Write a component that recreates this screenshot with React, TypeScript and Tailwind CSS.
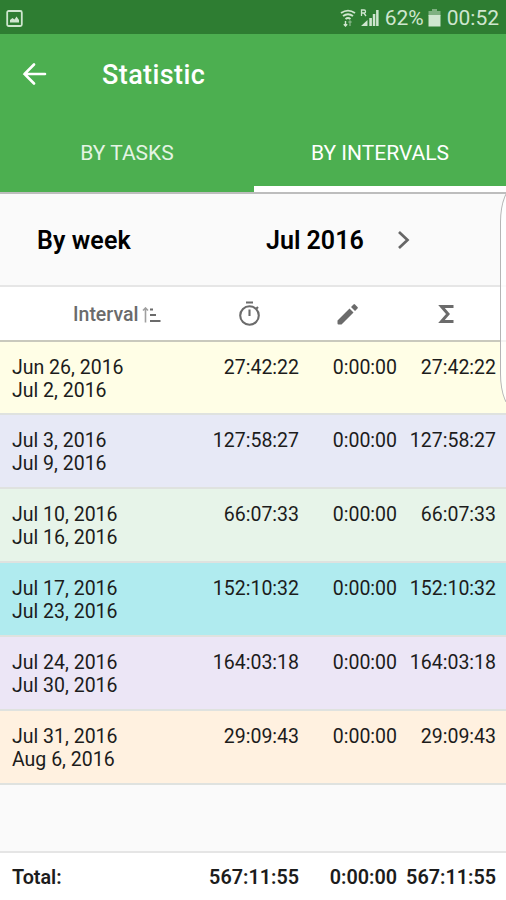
type Interval = {
  from: string;
  to: string;
  tracked: string;
  edited: string;
  total: string;
  color: string;
};

const intervals: Interval[] = [
  { from: 'Jun 26, 2016', to: 'Jul 2, 2016', tracked: '27:42:22', edited: '0:00:00', total: '27:42:22', color: 'h-[73px] bg-[#fffee6]' },
  { from: 'Jul 3, 2016', to: 'Jul 9, 2016', tracked: '127:58:27', edited: '0:00:00', total: '127:58:27', color: 'h-[74px] bg-[#e7e9f6]' },
  { from: 'Jul 10, 2016', to: 'Jul 16, 2016', tracked: '66:07:33', edited: '0:00:00', total: '66:07:33', color: 'h-[74px] bg-[#e7f4e9]' },
  { from: 'Jul 17, 2016', to: 'Jul 23, 2016', tracked: '152:10:32', edited: '0:00:00', total: '152:10:32', color: 'h-[74px] bg-[#b0ebef]' },
  { from: 'Jul 24, 2016', to: 'Jul 30, 2016', tracked: '164:03:18', edited: '0:00:00', total: '164:03:18', color: 'h-[74px] bg-[#ece6f6]' },
  { from: 'Jul 31, 2016', to: 'Aug 6, 2016', tracked: '29:09:43', edited: '0:00:00', total: '29:09:43', color: 'h-[74px] bg-[#fff1e0]' },
];

function StatusBar() {
  return (
    <div className="flex h-[34px] shrink-0 items-center bg-[#2e7d32] pl-[6px] pr-[7px] pt-[2px] text-[#cfe6cf]">
      <svg width="17" height="17" viewBox="0 0 17 17" fill="none">
        <rect x="1.2" y="1" width="14.6" height="15" rx="1.5" stroke="currentColor" strokeWidth="1.8" />
        <path d="M4 12.5V10l2.5-2 2 1.5L10.5 6.5 13 10v2.5z" fill="currentColor" />
      </svg>
      <div className="ml-auto flex items-center">
        <svg width="16" height="18" viewBox="0 0 16 18" fill="none" stroke="currentColor" strokeWidth="1.9">
          <path d="M1 4Q8-.8 15 4M3 7q5-3.6 10 0M5.5 10q2.5-2 5 0" />
          <path d="M5.5 12v5M3.8 15.2l1.7 1.8 1.7-1.8" strokeWidth="1.4" />
          <path d="M10 17v-5M8.5 13.5l1.5-1.5 1.5 1.5" strokeWidth="1.4" opacity=".5" />
        </svg>
        <svg className="ml-[4px]" width="19" height="18" viewBox="0 0 19 18" fill="currentColor">
          <path d="M1 17 7.5 11v6zM9.3 9h2.6v8H9.3zM12.8 5h2.5v12h-2.5zM16.1 1h2.5v16h-2.5z" />
          <path d="M1.5 7V1h2.7q1.3 0 1.3 1.5T4.2 4H1.5M3.8 4 6 7" fill="none" stroke="currentColor" strokeWidth="1.3" />
        </svg>
        <span className="ml-[6px] text-[21px] leading-6">62%</span>
        <svg className="ml-[4px]" width="13" height="18" viewBox="0 0 13 18" fill="currentColor">
          <path d="M4 0h5v2h3.5v5H.5V2H4z" opacity=".5" />
          <path d="M.5 6h12v11.5H.5z" />
        </svg>
        <span className="ml-[6px] text-[21px] leading-6">00:52</span>
      </div>
    </div>
  );
}

function TimerIcon() {
  return (
    <svg width="26" height="28" viewBox="0 0 26 28" fill="none" stroke="currentColor" strokeWidth="2.1">
      <circle cx="13.5" cy="15.5" r="9.3" />
      <path d="M10 2.5h7M13.5 9.5v6.5M20 9l2-2" />
    </svg>
  );
}

function Header() {
  return (
    <header className="flex h-[158px] shrink-0 flex-col bg-[#4caf50] text-white">
      <div className="flex h-[81px] items-center pl-[22px]">
        <svg width="26" height="24" viewBox="0 0 26 24" fill="none" stroke="currentColor" strokeWidth="2.6" strokeLinecap="round">
          <path d="M2.5 11H23M12 1.5 2.5 11l9.5 9.5" />
        </svg>
        <h1 className="ml-[54px] pt-[2px] text-[27px] font-medium tracking-[0.4px]">Statistic</h1>
      </div>
      <div className="flex flex-1 text-[21px]">
        <button className="flex-1 pt-[1px] pl-[1px] text-[#e4f4e4]">BY TASKS</button>
        <button className="ml-[1px] flex-1 border-b-[6px] border-white pt-[7px]">BY INTERVALS</button>
      </div>
    </header>
  );
}

function Cells({ tracked, edited, total }: { tracked: string; edited: string; total: string }) {
  return (
    <>
      <span className="w-[99px] text-right">{tracked}</span>
      <span className="w-[98px] text-right">{edited}</span>
      <span className="w-[99px] text-right">{total}</span>
    </>
  );
}

export default function App() {
  return (
    <div className="relative flex h-[900px] w-[506px] flex-col overflow-hidden bg-[#fafafa] font-[Roboto,sans-serif] text-[#1c1c1c]">
      <StatusBar />
      <Header />

      <div className="flex h-[95px] shrink-0 items-center border-t-2 border-b-2 border-t-[#bdbdbd] border-b-[#e6e6e6] pt-[3px] text-[25px] font-semibold text-black">
        <span className="w-[229px] pl-[37px] tracking-[0.1px]">By week</span>
        <span className="w-[136px] pl-[37px] whitespace-nowrap">Jul 2016</span>
        <svg className="mb-[3px] ml-[32px]" width="14" height="20" viewBox="0 0 14 20" fill="none" stroke="#666" strokeWidth="2.7">
          <path d="m2 2 8.5 8L2 18" />
        </svg>
      </div>

      <div className="flex h-[55px] shrink-0 items-center border-b-2 border-[#c9c9bd] bg-white text-[#6b6b6b]">
        <div className="flex w-[200px] items-center pt-[2px] pl-[73px] text-[19.5px] font-medium">
          Interval
          <svg className="ml-[4px]" width="20" height="16" viewBox="0 0 20 16" fill="none" stroke="currentColor">
            <path d="M3.5 15.5V2M1 3.5 3.5 1 6 3.5" strokeWidth="1.6" opacity=".65" />
            <path d="M8 2.5h3M8 8h6M8 14h10.5" strokeWidth="1.9" />
          </svg>
        </div>
        <div className="flex w-[98px] justify-center"><TimerIcon /></div>
        <div className="flex w-[99px] justify-center">
          <svg width="24" height="24" viewBox="0 0 24 24" fill="currentColor">
            <path d="M1.5 18.5v3q0 1 1 1h3L17.5 10.5l-4-4zM21.5 6.5a1 1 0 0 0 0-1.5l-2.5-2.5a1 1 0 0 0-1.5 0L15 5l4 4z" />
          </svg>
        </div>
        <div className="flex w-[98px] justify-center">
          <svg width="16" height="20" viewBox="0 0 16 20" fill="none" stroke="currentColor" strokeWidth="3">
            <path d="M15.5 2.5H3.5l6.5 7.5-6.5 7.5h12" />
          </svg>
        </div>
      </div>

      <main className="flex flex-col text-[19.5px] leading-[23px]">
        {intervals.map((row) => (
          <div key={row.from} className={`flex border-b-2 border-[#dfe2df] pt-[14px] pl-[12px] ${row.color}`}>
            <div className="w-[188px]">
              <div>{row.from}</div>
              <div>{row.to}</div>
            </div>
            <Cells tracked={row.tracked} edited={row.edited} total={row.total} />
          </div>
        ))}
      </main>

      <footer className="mt-auto flex h-[49px] shrink-0 items-center border-t-2 border-[#e5e5e5] bg-white pt-[2px] pl-[12px] text-[19.8px] font-semibold">
        <span className="w-[188px]">Total:</span>
        <Cells tracked="567:11:55" edited="0:00:00" total="567:11:55" />
      </footer>

      {/* edge panel handle */}
      <div className="absolute top-[186px] -right-[24px] h-[224px] w-[30px] rounded-[15px/36px] border border-[#b5b5b5] bg-white/80 [clip-path:inset(8px_0_8px_0)]" />
    </div>
  );
}
